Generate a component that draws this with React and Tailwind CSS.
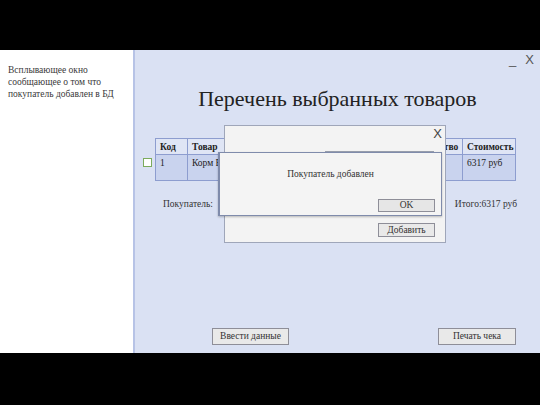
export default function App() {
  const cols = [
    { label: "Код", w: "w-[32px]" },
    { label: "Товар", w: "w-[110px]" },
    { label: "Цена", w: "w-[106px]" },
    { label: "Количество", w: "w-[59px]" },
    { label: "Стоимость", w: "w-[53px]" },
  ];
  const row = ["1", "Корм Royal Canin", "6317 руб", "1", "6317 руб"];

  return (
    <div
      className="w-[540px] h-[405px] bg-black flex flex-col"
      style={{ fontFamily: '"Liberation Serif", "Times New Roman", serif' }}
    >
      <div className="h-[50px]" />
      <div className="flex h-[303px]">
        {/* Left note */}
        <div className="w-[133px] bg-white px-[8px] pt-[14px] text-[9.5px] leading-[12px] text-[#3a3a3a]">
          Всплывающее окно
          <br />
          сообщающее о том что
          <br />
          покупатель добавлен в БД
        </div>

        {/* Main window */}
        <div className="flex-1 relative bg-[#dae1f3] border-l-2 border-[#b7c3e6] flex flex-col">
          <div className="flex justify-end gap-[9px] pr-[6px] pt-[2px] h-[16px] text-[13px] leading-[16px] text-[#555] font-['Liberation_Sans',sans-serif]">
            <span>_</span>
            <span>X</span>
          </div>
          <div className="mt-[19px] text-center text-[22px] leading-[28px] text-[#222]">
            Перечень выбранных товаров
          </div>

          {/* Table */}
          <div className="flex items-start mt-[25px] pl-[8px]">
            <div className="w-[9px] h-[9px] mt-[20px] mr-[3px] bg-white border border-[#7cab5c]" />
            <table className="table-fixed w-[360px] border-collapse text-[9.5px] leading-[12px] text-[#222]">
              <thead>
                <tr className="bg-[#dfe5f5]">
                  {cols.map((c) => (
                    <th
                      key={c.label}
                      className={`${c.w} h-[16px] border border-[#8d9dcf] text-left font-bold px-[4px] overflow-hidden whitespace-nowrap`}
                    >
                      {c.label}
                    </th>
                  ))}
                </tr>
              </thead>
              <tbody>
                <tr className="bg-[#c9d3ee]">
                  {row.map((v, i) => (
                    <td
                      key={i}
                      className="h-[26px] border border-[#8d9dcf] align-top px-[4px] pt-[2px] overflow-hidden whitespace-nowrap"
                    >
                      {v}
                    </td>
                  ))}
                </tr>
              </tbody>
            </table>
          </div>

          <div className="flex justify-between mt-[17px] pl-[28px] pr-[23px] text-[9.5px] leading-[12px] text-[#333]">
            <span>Покупатель:</span>
            <span>Итого:6317 руб</span>
          </div>

          <div className="flex-1" />

          <div className="flex justify-between pl-[77px] pr-[24px] mb-[8px]">
            <button className="w-[77px] h-[17px] bg-[#e9e9e9] border border-[#8e8e98] text-[9.5px] leading-[15px] text-[#333]">
              Ввести данные
            </button>
            <button className="w-[78px] h-[17px] bg-[#e9e9e9] border border-[#8e8e98] text-[9.5px] leading-[15px] text-[#333]">
              Печать чека
            </button>
          </div>

          {/* Outer dialog */}
          <div className="absolute left-[89px] top-[75px] w-[222px] h-[118px] bg-[#f3f3f3] border border-[#9fa6b9]">
            <div className="absolute right-[3px] top-[1px] text-[13px] leading-[14px] text-[#444] font-['Liberation_Sans',sans-serif]">
              X
            </div>
            <div className="absolute left-[100px] top-[25px] w-[109px] h-[14px] border border-[#9aa0ae] bg-white" />
            <button className="absolute left-[153px] top-[97px] w-[57px] h-[14px] bg-[#e9e9e9] border border-[#8e8e98] text-[9.5px] leading-[12px] text-[#333]">
              Добавить
            </button>
          </div>

          {/* Inner dialog */}
          <div className="absolute left-[83px] top-[102px] w-[224px] h-[64px] bg-[#f4f4f4] border border-[#7f8bab] border-l-2 shadow-[0_1px_2px_rgba(0,0,0,0.25)]">
            <div className="text-center mt-[15px] text-[9.5px] leading-[12px] text-[#333]">
              Покупатель добавлен
            </div>
            <button className="absolute left-[158px] top-[46px] w-[57px] h-[13px] bg-[#e6e6e6] border border-[#8e8e98] text-[9.5px] leading-[11px] text-[#333]">
              OK
            </button>
          </div>
        </div>
      </div>
    </div>
  );
}
